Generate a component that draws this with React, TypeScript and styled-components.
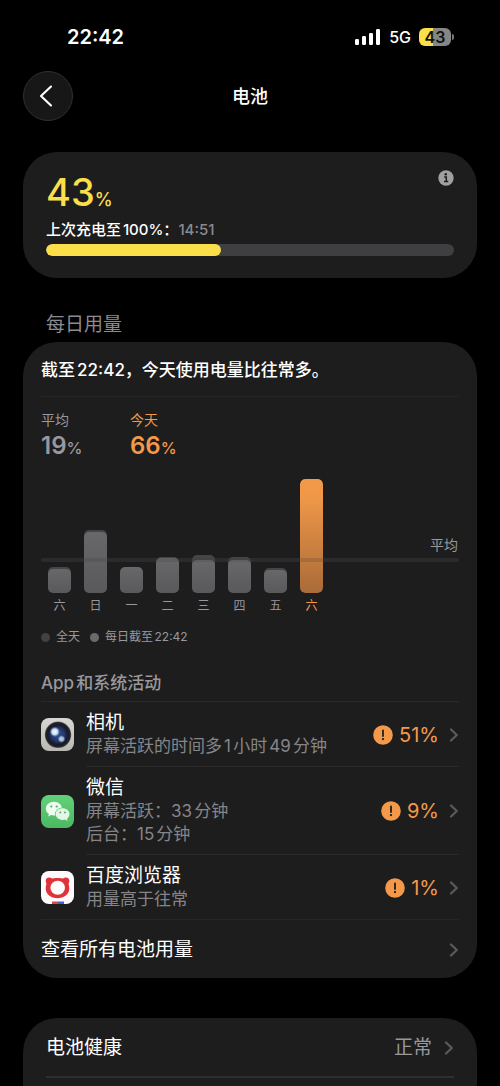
import React from 'react';
import styled, { createGlobalStyle } from 'styled-components';

const c = {
  card: '#1d1d1e',
  line: '#29292a',
  track: '#3f3f41',
  gray: '#98989d',
  sub: '#858588',
  yellow: '#fadf4b',
  orange: '#f4994a',
};

const GlobalStyle = createGlobalStyle`
  *, *::before, *::after { box-sizing: border-box; }
  html { background: #000; }
  body {
    margin: 0;
    background: #000;
    color: #fff;
    font-family: Inter, "Noto Sans CJK SC", sans-serif;
    text-autospace: normal;
  }
  button { font: inherit; color: inherit; background: none; border: 0; padding: 0; margin: 0; cursor: pointer; }
  h1, h2, h3, p, ul, dl, dd, dt { margin: 0; padding: 0; font-weight: inherit; }
  ul { list-style: none; }
  small { line-height: 1; }
`;

const Page = styled.div`
  display: flex;
  flex-direction: column;
  min-height: 100vh;
  padding: 0 23px;
`;

const StatusBar = styled.div`
  display: flex;
  align-items: center;
  justify-content: space-between;
  padding: 25px 23px 22px 44px;
`;

const Clock = styled.time`
  font-size: 20px;
  line-height: 24px;
  font-weight: 600;
`;

const StatusIcons = styled.div`
  display: flex;
  align-items: center;
  gap: 8px;
  font-size: 16px;
  line-height: 24px;
  font-weight: 500;
`;

const BatteryWrap = styled.span`
  display: flex;
  align-items: center;
  gap: 1px;
`;

const BatteryBody = styled.span`
  width: 32px;
  height: 18px;
  border-radius: 6px;
  background: linear-gradient(90deg, ${c.yellow} 43%, #868686 43%);
  color: #111;
  font-size: 16px;
  line-height: 18px;
  font-weight: 600;
  text-align: center;
`;

const BatteryTip = styled.span`
  width: 2px;
  height: 6px;
  border-radius: 0 2px 2px 0;
  background: #777;
`;

const NavBar = styled.header`
  display: grid;
  grid-template-columns: 50px 1fr 50px;
  align-items: center;
  margin-bottom: 31px;
`;

const BackButton = styled.button`
  display: flex;
  align-items: center;
  justify-content: center;
  width: 50px;
  height: 50px;
  padding-right: 4px;
  border: 1px solid #2f2f30;
  border-radius: 50%;
  background: #171717;
`;

const Title = styled.h1`
  padding-top: 2px;
  font-size: 18px;
  line-height: 26px;
  font-weight: 500;
  text-align: center;
`;

const Card = styled.section<{ $open?: boolean; $pad: number }>`
  padding: 0 ${(p) => p.$pad}px;
  background: ${c.card};
  border-radius: ${(p) => (p.$open ? '34px 34px 0 0' : '34px')};
  flex: ${(p) => (p.$open ? '1 0 auto' : '0 0 auto')};
`;

const LevelTop = styled.div`
  display: flex;
  justify-content: space-between;
  align-items: flex-start;
  padding-top: 18px;
`;

const Level = styled.p`
  padding-top: 2px;
  font-size: 38px;
  line-height: 40px;
  font-weight: 500;
  color: ${c.yellow};
  small { font-size: 18px; }
`;

const InfoButton = styled.button`
  display: flex;
  line-height: 0;
`;

const LastCharge = styled.p`
  margin-top: 8px;
  font-size: 15px;
  line-height: 20px;
  font-weight: 500;
  span { color: #8a8a8e; }
`;

const Track = styled.div`
  height: 12px;
  margin: 4px 0 22px;
  border-radius: 6px;
  background: ${c.track};
  overflow: hidden;
`;

const Fill = styled.div`
  height: 100%;
  border-radius: 6px;
  background: ${c.yellow};
`;

const SectionTitle = styled.h2`
  padding: 34px 23px 4px;
  font-size: 19px;
  line-height: 26px;
  font-weight: 400;
  color: #8b8b90;
`;

const Summary = styled.p`
  padding: 16px 0 14px;
  border-bottom: 1px solid #262627;
  font-size: 17px;
  line-height: 24px;
  font-weight: 500;
`;

const Stats = styled.dl`
  display: grid;
  grid-template-columns: 89px 1fr;
  padding: 13px 0 19px;
`;

const Stat = styled.div<{ $hot?: boolean }>`
  color: ${(p) => (p.$hot ? c.orange : c.gray)};
  dt { font-size: 14px; line-height: 20px; font-weight: 400; }
  dd { padding-top: 2px; font-size: 24px; line-height: 28px; font-weight: 600; }
  small { font-size: 16px; font-weight: 500; }
`;

const Plot = styled.div`
  position: relative;
  display: flex;
  align-items: flex-end;
  gap: 13px;
  height: 114px;
  padding: 0 7px;
`;

const AverageLine = styled.div<{ $front?: boolean }>`
  position: absolute;
  left: 0;
  right: 0;
  bottom: 31px;
  height: 4px;
  border-radius: 2px;
  background: ${(p) => (p.$front ? 'rgba(60, 60, 60, 0.2)' : '#272728')};
`;

const AverageLabel = styled.span`
  position: absolute;
  right: 1px;
  bottom: 38px;
  font-size: 14px;
  line-height: 20px;
  color: ${c.gray};
`;

const Bar = styled.div<{ $hot?: boolean }>`
  position: relative;
  display: flex;
  align-items: flex-end;
  width: 23px;
  border-radius: 5px;
  overflow: hidden;
  background: ${(p) => (p.$hot ? 'none' : '#454547')};
`;

const BarPart = styled.div<{ $hot?: boolean }>`
  width: 100%;
  border-radius: 5px;
  background: ${(p) =>
    p.$hot
      ? 'linear-gradient(#f39a49, #f09848 15%, #a96b38)'
      : 'linear-gradient(#68686a, #59595b)'};
`;

const Days = styled.div`
  display: flex;
  gap: 13px;
  padding: 5px 7px 0;
  font-size: 12px;
  line-height: 16px;
`;

const Day = styled.span<{ $hot?: boolean }>`
  width: 23px;
  text-align: center;
  font-weight: 400;
  color: ${(p) => (p.$hot ? c.orange : c.gray)};
`;

const Legend = styled.div`
  display: flex;
  gap: 10px;
  padding-top: 15px;
  font-size: 12px;
  line-height: 16px;
  color: ${c.gray};
`;

const LegendItem = styled.span<{ $dot: string }>`
  display: flex;
  align-items: center;
  gap: 6px;
  &::before {
    content: '';
    width: 9px;
    height: 9px;
    border-radius: 50%;
    background: ${(p) => p.$dot};
  }
`;

const ActivityTitle = styled.h3`
  padding: 26px 0 6px;
  border-bottom: 1px solid ${c.line};
  font-size: 17px;
  line-height: 24px;
  font-weight: 500;
  color: ${c.gray};
`;

const AppItem = styled.li<{ $full?: boolean }>`
  border-bottom: ${(p) => (p.$full ? `1px solid #262627` : '0')};
`;

const AppRow = styled.button`
  display: flex;
  align-items: center;
  gap: 12px;
  width: 100%;
  text-align: left;
  svg { flex: none; }
`;

const AppBody = styled.span<{ $line?: boolean }>`
  display: flex;
  flex: 1;
  align-items: center;
  padding: 9px 0 8px;
  border-bottom: ${(p) => (p.$line ? `1px solid ${c.line}` : '0')};
`;

const AppText = styled.span`
  display: flex;
  flex: 1;
  flex-direction: column;
`;

const AppName = styled.span`
  font-size: 19px;
  line-height: 24px;
`;

const AppNote = styled.span`
  font-size: 17px;
  line-height: 23px;
  color: ${c.sub};
`;

const Share = styled.span`
  display: flex;
  align-items: center;
  gap: 6px;
  margin-right: 10px;
  font-size: 20px;
  line-height: 24px;
  color: ${c.orange};
`;

const LinkRow = styled.button<{ $line?: boolean }>`
  display: flex;
  align-items: center;
  width: 100%;
  padding: 17px 0 16px;
  border-bottom: ${(p) => (p.$line ? '2px solid #2e2e2f' : '0')};
  font-size: 19px;
  line-height: 25px;
  text-align: left;
`;

const RowLabel = styled.span`
  flex: 1;
`;

const RowValue = styled.span`
  margin-right: 12px;
  color: ${c.gray};
`;

const Spacer = styled.div`
  height: 40px;
`;

const Chevron = () => (
  <svg width="10" height="14" viewBox="0 0 10 14" fill="none" aria-hidden="true">
    <path d="M2 1.5 7.8 7 2 12.5" stroke="#5b5b5e" strokeWidth="2.2" strokeLinecap="round" strokeLinejoin="round" />
  </svg>
);

const Alert = () => (
  <svg width="20" height="20" viewBox="0 0 20 20" aria-hidden="true">
    <circle cx="10" cy="10" r="9.8" fill={c.orange} />
    <path d="M10 5.4v5.6" stroke="#1d1d1e" strokeWidth="1.8" strokeLinecap="round" />
    <circle cx="10" cy="14.1" r="1.15" fill="#1d1d1e" />
  </svg>
);

const CameraIcon = () => (
  <svg width="33" height="33" viewBox="0 0 33 33" aria-hidden="true">
    <defs>
      <linearGradient id="camBody" x1="0" y1="0" x2="0" y2="1">
        <stop offset="0" stopColor="#d9d7d4" />
        <stop offset="1" stopColor="#bab8b4" />
      </linearGradient>
      <radialGradient id="camLens" cx="0.5" cy="0.5" r="0.5">
        <stop offset="0" stopColor="#34508f" />
        <stop offset="0.5" stopColor="#25356a" />
        <stop offset="0.75" stopColor="#171a2a" />
        <stop offset="0.92" stopColor="#242326" />
        <stop offset="1" stopColor="#6a6867" />
      </radialGradient>
      <radialGradient id="camGlow">
        <stop offset="0" stopColor="#fff" />
        <stop offset="0.55" stopColor="#c4dcf5" />
        <stop offset="1" stopColor="#4d7cc0" stopOpacity="0" />
      </radialGradient>
    </defs>
    <rect width="33" height="33" rx="8" fill="url(#camBody)" />
    <circle cx="17" cy="16.8" r="13.2" fill="url(#camLens)" />
    <circle cx="13.8" cy="13.8" r="5.4" fill="url(#camGlow)" />
    <circle cx="20.5" cy="21" r="4" fill="url(#camGlow)" opacity="0.75" />
  </svg>
);

const WeChatIcon = () => (
  <svg width="33" height="33" viewBox="0 0 33 33" aria-hidden="true">
    <defs>
      <linearGradient id="wx" x1="0" y1="0" x2="0" y2="1">
        <stop offset="0" stopColor="#62d178" />
        <stop offset="1" stopColor="#4bb963" />
      </linearGradient>
    </defs>
    <rect width="33" height="33" rx="8" fill="url(#wx)" />
    <path d="M12.9 6.8c-4.5 0-8.1 3-8.1 6.9 0 2.2 1.2 4.2 3.1 5.4l-.8 2.5 3-1.5c.9.3 1.8.4 2.8.4 4.5 0 8.1-3 8.1-6.8 0-3.9-3.6-6.9-8.1-6.9z" fill="#effaf0" />
    <ellipse cx="21.6" cy="19.1" rx="7.6" ry="6.6" fill="#56c46c" />
    <path d="M21.6 13.2c3.9 0 6.9 2.6 6.9 5.9 0 1.9-1 3.5-2.5 4.6l.6 2.2-2.6-1.3c-.8.2-1.6.3-2.4.3-3.9 0-6.9-2.5-6.9-5.8s3-5.9 6.9-5.9z" fill="#e4f6e6" />
    <circle cx="10.3" cy="11.5" r="1.1" fill="#4cab60" />
    <circle cx="15.7" cy="11.5" r="1.1" fill="#4cab60" />
    <circle cx="19.3" cy="17.4" r="0.95" fill="#4cab60" />
    <circle cx="23.9" cy="17.4" r="0.95" fill="#4cab60" />
  </svg>
);

const BaiduIcon = () => (
  <svg width="33" height="33" viewBox="0 0 33 33" aria-hidden="true">
    <rect width="33" height="33" rx="8" fill="#fdfbfb" />
    <circle cx="8.2" cy="10" r="3.5" fill="#df3339" />
    <circle cx="24.8" cy="10" r="3.5" fill="#df3339" />
    <path d="M16.5 7c5 0 9 1 10.5 4.5 1 2.300 1.500 4.800 1.200 7.300-.8 5-5.200 8.400-11.700 8.400S5.600 23.800 4.800 18.800c-.3-2.500.2-5 1.200-7.300C7.500 8 11.500 7 16.500 7z" fill="#df3339" />
    <ellipse cx="16.7" cy="16.8" rx="7.3" ry="7" fill="#fdfbfb" />
    <rect x="11" y="30.5" width="6" height="2.5" fill="#d8474d" />
    <rect x="17" y="30.5" width="6" height="2.5" fill="#3b66cf" />
  </svg>
);

const days = [
  { name: '六', all: 26, part: 24 },
  { name: '日', all: 63, part: 61 },
  { name: '一', all: 26, part: 26 },
  { name: '二', all: 36, part: 35 },
  { name: '三', all: 38, part: 33 },
  { name: '四', all: 36, part: 33 },
  { name: '五', all: 25, part: 23 },
  { name: '六', all: 114, part: 114, hot: true },
];

const apps = [
  { name: '相机', notes: ['屏幕活跃的时间多1小时49分钟'], share: 51, icon: <CameraIcon /> },
  { name: '微信', notes: ['屏幕活跃：33分钟', '后台：15分钟'], share: 9, icon: <WeChatIcon /> },
  { name: '百度浏览器', notes: ['用量高于往常'], share: 1, icon: <BaiduIcon /> },
];

export default function App() {
  const level = 43;
  return (
    <>
      <GlobalStyle />
      <Page>
        <StatusBar>
          <Clock>22:42</Clock>
          <StatusIcons>
            <svg width="26" height="16" viewBox="0 0 26 16" fill="#fff" aria-hidden="true">
              <rect x="0" y="10" width="4" height="6" rx="1.2" />
              <rect x="7" y="7" width="4" height="9" rx="1.2" />
              <rect x="14" y="4" width="4" height="12" rx="1.2" />
              <rect x="21" y="0" width="4" height="16" rx="1.2" />
            </svg>
            <span>5G</span>
            <BatteryWrap>
              <BatteryBody>{level}</BatteryBody>
              <BatteryTip />
            </BatteryWrap>
          </StatusIcons>
        </StatusBar>

        <NavBar>
          <BackButton aria-label="返回">
            <svg width="14" height="22" viewBox="0 0 14 22" fill="none" aria-hidden="true">
              <path d="M12 1.5 2 11 12 20.5" stroke="#fff" strokeWidth="2.1" strokeLinecap="round" strokeLinejoin="round" />
            </svg>
          </BackButton>
          <Title>电池</Title>
        </NavBar>

        <Card $pad={23}>
          <LevelTop>
            <Level>
              {level}
              <small>%</small>
            </Level>
            <InfoButton aria-label="信息">
              <svg width="16" height="16" viewBox="0 0 16 16" aria-hidden="true">
                <circle cx="8" cy="8" r="7.7" fill="#a0a0a3" />
                <circle cx="7.8" cy="4.3" r="1.2" fill="#1d1d1e" />
                <path d="M6.2 7h2.1v4.4M6 11.6h4.2" stroke="#1d1d1e" strokeWidth="1.5" fill="none" />
              </svg>
            </InfoButton>
          </LevelTop>
          <LastCharge>
            上次充电至100%：<span>14:51</span>
          </LastCharge>
          <Track>
            <Fill style={{ width: `${level}%` }} />
          </Track>
        </Card>

        <SectionTitle>每日用量</SectionTitle>
        <Card $pad={18}>
          <Summary>截至22:42，今天使用电量比往常多。</Summary>
          <Stats>
            <Stat>
              <dt>平均</dt>
              <dd>19<small>%</small></dd>
            </Stat>
            <Stat $hot>
              <dt>今天</dt>
              <dd>66<small>%</small></dd>
            </Stat>
          </Stats>
          <Plot>
            <AverageLine />
            {days.map((d, i) => (
              <Bar key={i} $hot={d.hot} style={{ height: d.all }}>
                <BarPart $hot={d.hot} style={{ height: d.part }} />
              </Bar>
            ))}
            <AverageLine $front />
            <AverageLabel>平均</AverageLabel>
          </Plot>
          <Days>
            {days.map((d, i) => (
              <Day key={i} $hot={d.hot}>{d.name}</Day>
            ))}
          </Days>
          <Legend>
            <LegendItem $dot="#424244">全天</LegendItem>
            <LegendItem $dot="#6a6a6c">每日截至22:42</LegendItem>
          </Legend>
          <ActivityTitle>App和系统活动</ActivityTitle>
          <ul>
            {apps.map((a, i) => {
              const last = i === apps.length - 1;
              return (
                <AppItem key={a.name} $full={last}>
                  <AppRow>
                    {a.icon}
                    <AppBody $line={!last}>
                      <AppText>
                        <AppName>{a.name}</AppName>
                        {a.notes.map((n) => (
                          <AppNote key={n}>{n}</AppNote>
                        ))}
                      </AppText>
                      <Share>
                        <Alert />
                        {a.share}%
                      </Share>
                      <Chevron />
                    </AppBody>
                  </AppRow>
                </AppItem>
              );
            })}
          </ul>
          <LinkRow>
            <RowLabel>查看所有电池用量</RowLabel>
            <Chevron />
          </LinkRow>
        </Card>

        <Spacer />
        <Card $open $pad={23}>
          <LinkRow $line>
            <RowLabel>电池健康</RowLabel>
            <RowValue>正常</RowValue>
            <Chevron />
          </LinkRow>
        </Card>
      </Page>
    </>
  );
}
